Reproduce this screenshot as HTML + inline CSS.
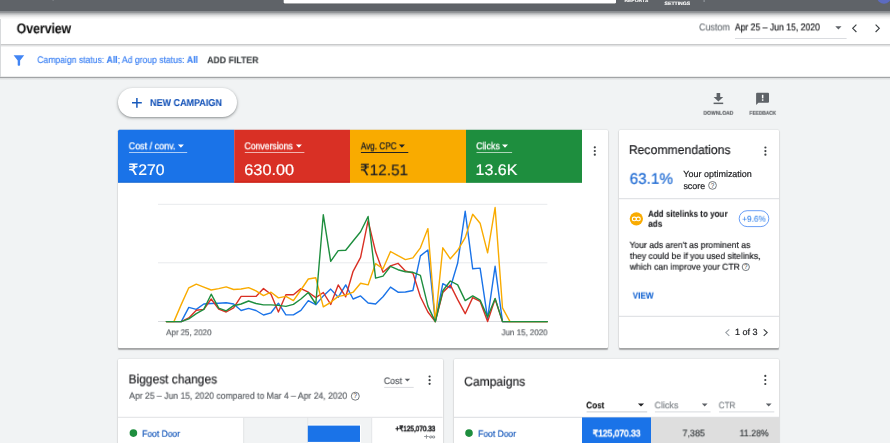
<!DOCTYPE html>
<html><head><meta charset="utf-8"><title>Overview</title>
<style>
*{box-sizing:border-box;margin:0;padding:0}
html,body{width:890px;height:443px;overflow:hidden;background:#f1f3f4;font-family:"Liberation Sans","DejaVu Sans",sans-serif}
.abs,.t{position:absolute}
.t{left:0;top:0;white-space:nowrap;transform-origin:0 0;will-change:transform;text-rendering:geometricPrecision}
.t b{font-weight:700}
.card{position:absolute;background:#fff;border-radius:1px;box-shadow:0 1.3px 1.2px rgba(0,0,0,.3),0 0 1.5px rgba(0,0,0,.2)}
</style></head><body>
<svg class="abs" style="left:0;top:0" width="890" height="443" viewBox="0 0 890 443">
  <defs>
    <linearGradient id="g1" x1="0" y1="0" x2="0" y2="1"><stop offset="0" stop-color="#74777b"/><stop offset=".25" stop-color="#b4b6b8"/><stop offset=".5" stop-color="#dedfe0"/><stop offset=".75" stop-color="#f5f5f5"/><stop offset="1" stop-color="#fff"/></linearGradient>
    <linearGradient id="g2" x1="0" y1="0" x2="0" y2="1"><stop offset="0" stop-color="#e3e4e5"/><stop offset="1" stop-color="#fff"/></linearGradient>
    <linearGradient id="g3" x1="0" y1="0" x2="0" y2="1"><stop offset="0" stop-color="#d9dbdc"/><stop offset="1" stop-color="#f1f3f4"/></linearGradient>
    <linearGradient id="g4" x1="0" y1="0" x2="0" y2="1"><stop offset="0" stop-color="#3c4043"/><stop offset="1" stop-color="#5f6368"/></linearGradient>
  </defs>
  <rect x="0" y="11.5" width="890" height="66" fill="#fff"/>
  <rect x="0" y="11.5" width="890" height="8" fill="url(#g1)"/>
  <rect x="0" y="0" width="890" height="11.5" fill="#5f6368"/>
  <rect x="283.7" y="3.4" width="332.3" height="1.2" fill="url(#g4)"/>
  <rect x="283.7" y="-1" width="332.3" height="4.4" rx=".8" fill="#fff"/>
  <rect x="703.6" y="0" width="1" height="2" fill="#9aa0a6"/>
  <rect x="52.6" y="0" width="1" height="1" fill="#80868b"/>
  <circle cx="884" cy="-3.2" r="7" fill="#5c6bc0"/>
  <rect x="0" y="44.2" width="890" height="1.3" fill="#bcbdbf"/>
  <rect x="0" y="45.5" width="890" height="2" fill="url(#g2)"/>
  <rect x="0" y="76.8" width="890" height="1.2" fill="#a2a4a6"/>
  <rect x="0" y="78" width="890" height="2.5" fill="url(#g3)"/>
  <rect x="0" y="19" width=".9" height="58" fill="#d4d6d8"/>
  <rect x="735" y="38" width="111.6" height="1" fill="#dadce0"/>
</svg>
<svg class="abs" style="left:0;top:0" width="890" height="443" viewBox="0 0 890 443">
  <!-- header icons -->
  <path d="M835.3 26.3h6.2l-3.1 3.1z" fill="#5f6368"/>
  <path d="M856.4 24.6l-3.7 3.7 3.7 3.7" fill="none" stroke="#3c4043" stroke-width="1.15"/>
  <path d="M875.6 24.6l3.7 3.7-3.7 3.7" fill="none" stroke="#3c4043" stroke-width="1.15"/>
  <!-- filter funnel -->
  <path d="M13.6 55.2h10.6l-4.1 5.4v4.4q0 .8-.8.8h-.8q-.8 0-.8-.8v-4.4z" fill="#4285f4"/>
</svg>

<!-- new campaign button -->
<div class="abs" style="left:117.6px;top:87.6px;width:119.4px;height:29.6px;border-radius:15px;background:#fff;box-shadow:0 1px 2px rgba(60,64,67,.4),0 1px 3px 1px rgba(60,64,67,.15)"></div>
<svg class="abs" style="left:0;top:0" width="890" height="443" viewBox="0 0 890 443">
  <path d="M132 102.8h9.8M136.9 97.9v9.8" stroke="#185abc" stroke-width="1.5" fill="none"/>
  <!-- download -->
  <path d="M716.6 92.9h3.6v4h3l-4.8 4.5-4.8-4.5h3z" fill="#5f6368"/>
  <rect x="713.6" y="102.6" width="9.6" height="1.5" fill="#5f6368"/>
  <!-- feedback -->
  <path d="M757.1 92.7h10.9q1 0 1 1v8.1q0 1-1 1h-9.6l-2.3 2.3v-11.4q0-1 1-1z" fill="#5f6368"/>
  <rect x="761.9" y="94.8" width="1.5" height="3.6" fill="#fff"/>
  <rect x="761.9" y="99.3" width="1.5" height="1.5" fill="#fff"/>
</svg>

<!-- main card -->
<div class="card" style="left:118px;top:130px;width:490px;height:217.9px"></div>

<!-- recommendations card -->
<div class="card" style="left:619px;top:130px;width:160px;height:217.9px"></div>

<!-- bottom cards -->
<div class="card" style="left:118px;top:358.7px;width:324.6px;height:100px"></div>
<div class="card" style="left:454px;top:358.7px;width:325.2px;height:100px"></div>


<svg class="abs" style="left:0;top:0" width="890" height="443" viewBox="0 0 890 443">
  <path d="M118 131.3q0-1.5 1.5-1.5H234.2V182.6H118z" fill="#1a73e8"/>
  <rect x="234.2" y="129.8" width="115.8" height="52.8" fill="#d93025"/>
  <rect x="118" y="181.7" width="116.2" height=".9" fill="#1765cc"/>
  <rect x="234.2" y="181.7" width="115.8" height=".9" fill="#c5170c"/>
  <rect x="350" y="181.7" width="116" height=".9" fill="#ef9a00"/>
  <rect x="466" y="181.7" width="116" height=".9" fill="#18803a"/>
  <rect x="739.2" y="210.7" width="29.6" height="15.9" rx="7.95" fill="none" stroke="#4285f4" stroke-width=".8"/>
  <rect x="350" y="129.8" width="116" height="52.8" fill="#f9ab00"/>
  <rect x="466" y="129.8" width="116" height="52.8" fill="#1e8e3e"/>
  <rect x="619" y="198.2" width="160" height="1" fill="#dadce0"/>
  <rect x="619" y="315.8" width="160" height="1" fill="#dadce0"/>
  <circle cx="636.35" cy="218.85" r="6.65" fill="#f9ab00"/>
  <rect x="243.4" y="417.6" width="128.4" height="30" fill="#f1f3f4"/>
  <rect x="307.2" y="417.6" width="1" height="30" fill="#e4e6e8"/>
  <rect x="118" y="416.8" width="324.6" height="1" fill="#e0e2e4"/>
  <rect x="243.2" y="417.6" width="1" height="30" fill="#e3e5e6"/>
  <rect x="371.2" y="417.6" width="1" height="30" fill="#e4e6e8"/>
  <rect x="307.8" y="424.6" width="53.2" height="18.2" fill="#fff"/>
  <rect x="307.8" y="425.6" width="52.2" height="16.3" fill="#1a73e8"/>
  <circle cx="133.4" cy="433.1" r="3.8" fill="#1e8e3e"/>
  <rect x="454" y="416.8" width="325.2" height="1" fill="#dadce0"/>
  <rect x="582" y="417.4" width="69" height="30" fill="#1a73e8"/>
  <rect x="651" y="417.4" width="128.2" height="30" fill="#dedede"/>
  <circle cx="469" cy="433.1" r="3.8" fill="#1e8e3e"/>
</svg>
<svg class="abs" style="left:0;top:0" width="890" height="443" viewBox="0 0 890 443">
  <!-- tile underlines + carets -->
  <g stroke="#fff" stroke-width=".8" stroke-opacity=".8" fill="none">
    <path d="M129 152.5h58.2M244.8 152.5h59.6M476.5 152.5h35.6"/>
  </g>
  <path d="M360.9 152.5h47.4" stroke="#202124" stroke-width="1" fill="none"/>
  <path d="M177.9 144.6h6l-3 3.2zM295.9 144.6h6l-3 3.2zM502 144.6h6l-3 3.2z" fill="#fff"/>
  <path d="M398.9 144.6h6l-3 3.2z" fill="#202124"/>
  <!-- kebab menus -->
  <g fill="#3c4043">
    <circle cx="594.8" cy="147.3" r="1.1"/><circle cx="594.8" cy="151" r="1.1"/><circle cx="594.8" cy="154.7" r="1.1"/>
    <circle cx="765.4" cy="147.5" r="1.1"/><circle cx="765.4" cy="151.1" r="1.1"/><circle cx="765.4" cy="154.7" r="1.1"/>
    <circle cx="429.6" cy="376.5" r="1.1"/><circle cx="429.6" cy="380.2" r="1.1"/><circle cx="429.6" cy="383.8" r="1.1"/>
    <circle cx="765.3" cy="375.9" r="1.1"/><circle cx="765.3" cy="380" r="1.1"/><circle cx="765.3" cy="384" r="1.1"/>
  </g>
  <!-- chart grid -->
  <g stroke="#e8eaed" stroke-width="1" fill="none">
    <path d="M158 204.3h389.4M158 262.8h389.4"/>
  </g>
  <path d="M158 321.5h389.4" stroke="#dadce0" stroke-width="1" fill="none"/>
  <polyline points="166.4,321.6 173.9,321.6 181.3,321.6 188.8,307.4 196.3,309.4 203.8,304.0 211.2,303.5 218.7,303.2 226.2,302.8 233.6,304.0 241.1,310.5 248.6,308.4 256.0,310.5 263.5,315.0 271.0,312.8 278.4,303.2 285.9,314.9 293.4,314.9 300.9,310.3 308.3,300.6 315.8,304.7 323.3,295.9 330.7,289.1 338.2,297.3 345.7,284.9 353.1,299.0 360.6,295.9 368.1,303.0 375.6,304.0 383.0,296.8 390.5,287.1 398.0,292.2 405.4,292.0 412.9,290.5 420.4,255.9 427.9,250.0 435.3,321.6 442.8,283.7 450.3,287.8 457.7,263.0 465.2,211.3 472.7,268.8 480.1,268.1 487.6,318.3 495.1,266.3 502.5,321.6 510.0,321.6 517.5,321.6 525.0,321.6 532.4,321.6 539.9,321.6 547.4,321.6" fill="none" stroke="#1a73e8" stroke-width="1.4" stroke-linejoin="round" stroke-linecap="round"/>
<polyline points="166.4,321.6 173.9,321.6 181.3,321.6 188.8,317.9 196.3,310.3 203.8,309.4 211.2,299.0 218.7,309.1 226.2,312.0 233.6,307.8 241.1,296.4 248.6,296.4 256.0,296.4 263.5,288.6 271.0,294.2 278.4,312.0 285.9,294.7 293.4,294.7 300.9,288.6 308.3,292.2 315.8,297.6 323.3,292.5 330.7,304.4 338.2,284.9 345.7,296.8 353.1,271.3 360.6,257.3 368.1,220.7 375.6,251.8 383.0,272.2 390.5,265.8 398.0,263.3 405.4,270.9 412.9,273.1 420.4,296.8 427.9,312.0 435.3,321.6 442.8,292.5 450.3,284.9 457.7,299.6 465.2,313.7 472.7,297.6 480.1,301.3 487.6,321.6 495.1,299.0 502.5,321.6 510.0,321.6 517.5,321.6 525.0,321.6 532.4,321.6 539.9,321.6 547.4,321.6" fill="none" stroke="#d93025" stroke-width="1.4" stroke-linejoin="round" stroke-linecap="round"/>
<polyline points="166.4,321.6 173.9,321.6 181.3,304.4 188.8,287.8 196.3,284.1 203.8,287.1 211.2,290.0 218.7,288.6 226.2,286.9 233.6,289.5 241.1,289.0 248.6,287.6 256.0,290.8 263.5,295.6 271.0,292.2 278.4,297.9 285.9,296.4 293.4,300.6 300.9,290.0 308.3,279.0 315.8,277.8 323.3,306.9 330.7,302.3 338.2,296.4 345.7,295.1 353.1,292.2 360.6,283.2 368.1,284.9 375.6,263.6 383.0,268.8 390.5,251.5 398.0,255.7 405.4,259.6 412.9,257.9 420.4,247.8 427.9,228.6 435.3,321.6 442.8,247.8 450.3,258.8 457.7,250.3 465.2,237.6 472.7,214.3 480.1,223.2 487.6,252.8 495.1,207.5 502.5,307.8 510.0,321.6 517.5,321.6 525.0,321.6 532.4,321.6 539.9,321.6 547.4,321.6" fill="none" stroke="#f9ab00" stroke-width="1.4" stroke-linejoin="round" stroke-linecap="round"/>
<polyline points="166.4,321.6 173.9,321.6 181.3,321.6 188.8,318.8 196.3,313.7 203.8,309.4 211.2,294.2 218.7,308.1 226.2,310.8 233.6,305.7 241.1,304.0 248.6,301.0 256.0,303.5 263.5,304.9 271.0,304.9 278.4,305.4 285.9,306.4 293.4,304.4 300.9,299.0 308.3,292.5 315.8,304.0 323.3,214.8 330.7,261.4 338.2,250.6 345.7,250.3 353.1,241.0 360.6,231.7 368.1,216.5 375.6,278.1 383.0,276.1 390.5,266.3 398.0,269.7 405.4,271.7 412.9,272.3 420.4,275.3 427.9,306.1 435.3,321.6 442.8,290.8 450.3,281.0 457.7,284.9 465.2,300.6 472.7,295.9 480.1,300.1 487.6,317.1 495.1,298.4 502.5,321.6 510.0,321.6 517.5,321.6 525.0,321.6 532.4,321.6 539.9,321.6 547.4,321.6" fill="none" stroke="#1e8e3e" stroke-width="1.4" stroke-linejoin="round" stroke-linecap="round"/>
  <!-- help icons -->
  <g fill="none" stroke="#5f6368" stroke-width=".85">
    <circle cx="712.5" cy="185.4" r="3.9"/>
    <circle cx="745.8" cy="267" r="3.6"/>
    <circle cx="355.3" cy="396.2" r="4"/>
  </g>
  <!-- link icon in orange circle -->
  <g fill="none" stroke="#fff" stroke-width="1.1">
    <rect x="632.3" y="217.1" width="4" height="3.6" rx="1.8"/>
    <rect x="636.3" y="217.1" width="4" height="3.6" rx="1.8"/>
  </g>
  <!-- rec pager -->
  <path d="M729.3 329.3l-3.5 3.3 3.5 3.3" fill="none" stroke="#9aa0a6" stroke-width="1.1"/>
  <path d="M763.7 329.3l3.5 3.3-3.5 3.3" fill="none" stroke="#3c4043" stroke-width="1.1"/>
  <!-- biggest changes cost dropdown -->
  <path d="M404.7 378.8h5.4l-2.7 2.7z" fill="#5f6368"/>
  <path d="M384.2 387.4h29.5" stroke="#dadce0" stroke-width="1"/>
  <!-- campaigns header -->
  <path d="M637.9 403.6h6.2l-3.1 2.9z" fill="#202124"/>
  <path d="M701.8 403.6h5.8l-2.9 2.9zM765.8 403.6h5.8l-2.9 2.9z" fill="#5f6368"/>
  <path d="M586.6 411.8h60.6" stroke="#d5d7da" stroke-width="1.2"/>
  <path d="M654.9 411.8h55.7M719 411.8h55.3" stroke="#e0e2e5" stroke-width="1.2"/>
  <!-- question marks in help icons as text -->
  <g font-family="Liberation Sans, sans-serif" font-size="6.3" fill="#3c4043" text-anchor="middle">
    <text x="712.5" y="187.6">?</text>
    <text x="745.8" y="269.1">?</text>
    <text x="355.3" y="398.4">?</text>
  </g>
</svg>
<span class="t" style="font-size:14px;line-height:18px;font-weight:700;-webkit-text-stroke:0.1px currentColor;color:#111;transform:translate(16.65px,19.20px) scaleX(0.8765)">Overview</span>
<span class="t" style="font-size:4.8px;line-height:9px;font-weight:700;-webkit-text-stroke:0.1px currentColor;color:#fff;transform:translate(624.53px,-3.50px) scaleX(1.0243)">REPORTS</span>
<span class="t" style="font-size:4.8px;line-height:9px;font-weight:700;-webkit-text-stroke:0.1px currentColor;color:#fff;transform:translate(664.52px,-0.30px) scaleX(1.0739)">SETTINGS</span>
<span class="t" style="font-size:9.9px;line-height:14px;font-weight:400;-webkit-text-stroke:0.2px currentColor;color:#757a7f;transform:translate(699.01px,21.40px) scaleX(0.9094)">Custom</span>
<span class="t" style="font-size:9.9px;line-height:14px;font-weight:400;-webkit-text-stroke:0.2px currentColor;color:#202124;transform:translate(734.87px,21.40px) scaleX(0.8744)">Apr 25 – Jun 15, 2020</span>
<span class="t" style="font-size:9.5px;line-height:14px;font-weight:400;-webkit-text-stroke:0.2px currentColor;color:#4285f4;transform:translate(37.28px,53.90px) scaleX(0.9055)">Campaign status: <b>All</b>; Ad group status: <b>All</b></span>
<span class="t" style="font-size:9.4px;line-height:14px;font-weight:700;-webkit-text-stroke:0.1px currentColor;color:#3c4043;transform:translate(207.12px,53.20px) scaleX(0.9326)">ADD FILTER</span>
<span class="t" style="font-size:9.9px;line-height:14px;font-weight:700;-webkit-text-stroke:0.1px currentColor;color:#1553b8;transform:translate(150.00px,97.00px) scaleX(0.9120)">NEW CAMPAIGN</span>
<span class="t" style="font-size:5.6px;line-height:10px;font-weight:700;-webkit-text-stroke:0.1px currentColor;color:#54575b;transform:translate(703.48px,108.80px) scaleX(0.8865)">DOWNLOAD</span>
<span class="t" style="font-size:5.6px;line-height:10px;font-weight:700;-webkit-text-stroke:0.1px currentColor;color:#54575b;transform:translate(749.41px,108.80px) scaleX(0.8612)">FEEDBACK</span>
<span class="t" style="font-size:9.9px;line-height:14px;font-weight:400;-webkit-text-stroke:0.3px currentColor;color:#fff;transform:translate(128.68px,140.30px) scaleX(0.9098)">Cost / conv.</span>
<span class="t" style="font-size:15.4px;line-height:20px;font-weight:400;-webkit-text-stroke:0.2px currentColor;color:#fff;transform:translate(128.15px,161.30px) scaleX(1.0258)">₹270</span>
<span class="t" style="font-size:9.9px;line-height:14px;font-weight:400;-webkit-text-stroke:0.3px currentColor;color:#fff;transform:translate(244.48px,140.30px) scaleX(0.8786)">Conversions</span>
<span class="t" style="font-size:15.4px;line-height:20px;font-weight:400;-webkit-text-stroke:0.2px currentColor;color:#fff;transform:translate(244.30px,161.30px) scaleX(1.0598)">630.00</span>
<span class="t" style="font-size:9.9px;line-height:14px;font-weight:400;-webkit-text-stroke:0.3px currentColor;color:#202124;transform:translate(360.80px,140.30px) scaleX(0.8293)">Avg. CPC</span>
<span class="t" style="font-size:15.4px;line-height:20px;font-weight:400;-webkit-text-stroke:0.2px currentColor;color:#202124;transform:translate(359.98px,161.30px) scaleX(0.9932)">₹12.51</span>
<span class="t" style="font-size:9.9px;line-height:14px;font-weight:400;-webkit-text-stroke:0.3px currentColor;color:#fff;transform:translate(476.17px,140.30px) scaleX(0.8982)">Clicks</span>
<span class="t" style="font-size:15.4px;line-height:20px;font-weight:400;-webkit-text-stroke:0.2px currentColor;color:#fff;transform:translate(475.61px,161.30px) scaleX(1.0387)">13.6K</span>
<span class="t" style="font-size:8.3px;line-height:13px;font-weight:400;-webkit-text-stroke:0.2px currentColor;color:#5f6368;transform:translate(166.14px,326.20px) scaleX(0.9527)">Apr 25, 2020</span>
<span class="t" style="font-size:8.3px;line-height:13px;font-weight:400;-webkit-text-stroke:0.2px currentColor;color:#5f6368;transform:translate(501.53px,326.20px) scaleX(0.9589)">Jun 15, 2020</span>
<span class="t" style="font-size:12.6px;line-height:17px;font-weight:400;-webkit-text-stroke:0.2px currentColor;color:#202124;transform:translate(628.86px,142.00px) scaleX(0.9677)">Recommendations</span>
<span class="t" style="font-size:15.3px;line-height:20px;font-weight:400;-webkit-text-stroke:0.2px currentColor;color:#1967d2;transform:translate(629.62px,169.80px) scaleX(0.9990)">63.1%</span>
<span class="t" style="font-size:8.9px;line-height:13px;font-weight:400;-webkit-text-stroke:0.2px currentColor;color:#202124;transform:translate(683.34px,168.30px) scaleX(1.0106)">Your optimization</span>
<span class="t" style="font-size:8.9px;line-height:13px;font-weight:400;-webkit-text-stroke:0.2px currentColor;color:#202124;transform:translate(683.38px,179.70px) scaleX(1.0095)">score</span>
<span class="t" style="font-size:9.1px;line-height:14px;font-weight:700;-webkit-text-stroke:0.1px currentColor;color:#202124;transform:translate(648.05px,206.80px) scaleX(0.8834)">Add sitelinks to your</span>
<span class="t" style="font-size:9.1px;line-height:14px;font-weight:700;-webkit-text-stroke:0.1px currentColor;color:#202124;transform:translate(648.10px,216.70px) scaleX(0.9158)">ads</span>
<span class="t" style="font-size:8.5px;line-height:13px;font-weight:400;-webkit-text-stroke:0px currentColor;color:#1a73e8;transform:translate(742.17px,212.70px) scaleX(0.9687)">+9.6%</span>
<span class="t" style="font-size:8.8px;line-height:13px;font-weight:400;-webkit-text-stroke:0.2px currentColor;color:#202124;transform:translate(629.51px,238.90px) scaleX(0.9774)">Your ads aren't as prominent as</span>
<span class="t" style="font-size:8.8px;line-height:13px;font-weight:400;-webkit-text-stroke:0.2px currentColor;color:#202124;transform:translate(629.83px,249.90px) scaleX(0.9790)">they could be if you used sitelinks,</span>
<span class="t" style="font-size:8.8px;line-height:13px;font-weight:400;-webkit-text-stroke:0.2px currentColor;color:#202124;transform:translate(629.73px,260.70px) scaleX(0.9751)">which can improve your CTR</span>
<span class="t" style="font-size:9px;line-height:13px;font-weight:700;-webkit-text-stroke:0.1px currentColor;color:#1967d2;transform:translate(632.68px,289.60px) scaleX(0.9063)">VIEW</span>
<span class="t" style="font-size:9px;line-height:13px;font-weight:400;-webkit-text-stroke:0.2px currentColor;color:#202124;transform:translate(734.91px,325.90px) scaleX(1.0061)">1 of 3</span>
<span class="t" style="font-size:12.7px;line-height:17px;font-weight:400;-webkit-text-stroke:0.2px currentColor;color:#202124;transform:translate(128.55px,371.40px) scaleX(0.9438)">Biggest changes</span>
<span class="t" style="font-size:9.2px;line-height:14px;font-weight:400;-webkit-text-stroke:0.2px currentColor;color:#5f6368;transform:translate(129.19px,388.80px) scaleX(0.9380)">Apr 25 – Jun 15, 2020 compared to Mar 4 – Apr 24, 2020</span>
<span class="t" style="font-size:9.4px;line-height:14px;font-weight:400;-webkit-text-stroke:0.2px currentColor;color:#5f6368;transform:translate(383.84px,374.00px) scaleX(0.9367)">Cost</span>
<span class="t" style="font-size:9.3px;line-height:14px;font-weight:400;-webkit-text-stroke:0.2px currentColor;color:#185abc;transform:translate(142.14px,426.80px) scaleX(0.9155)">Foot Door</span>
<span class="t" style="font-size:7.6px;line-height:12px;font-weight:400;-webkit-text-stroke:0.55px currentColor;color:#202124;transform:translate(395.41px,423.20px) scaleX(0.8451)">+₹125,070.33</span>
<span class="t" style="font-size:7px;line-height:11px;font-weight:400;-webkit-text-stroke:0.2px currentColor;color:#80868b;transform:translate(423.64px,432.00px) scaleX(1.2945)">+∞</span>
<span class="t" style="font-size:12.7px;line-height:17px;font-weight:400;-webkit-text-stroke:0.2px currentColor;color:#202124;transform:translate(464.15px,373.70px) scaleX(0.9528)">Campaigns</span>
<span class="t" style="font-size:9.2px;line-height:14px;font-weight:700;-webkit-text-stroke:0.1px currentColor;color:#111;transform:translate(586.20px,398.30px) scaleX(0.8917)">Cost</span>
<span class="t" style="font-size:9.2px;line-height:14px;font-weight:400;-webkit-text-stroke:0.2px currentColor;color:#80868b;transform:translate(654.55px,398.30px) scaleX(0.9689)">Clicks</span>
<span class="t" style="font-size:9.2px;line-height:14px;font-weight:400;-webkit-text-stroke:0.2px currentColor;color:#80868b;transform:translate(718.63px,398.30px) scaleX(0.8824)">CTR</span>
<span class="t" style="font-size:9.3px;line-height:14px;font-weight:400;-webkit-text-stroke:0.2px currentColor;color:#185abc;transform:translate(478.14px,426.80px) scaleX(0.9155)">Foot Door</span>
<span class="t" style="font-size:9.3px;line-height:14px;font-weight:400;-webkit-text-stroke:0.55px currentColor;color:#fff;transform:translate(592.73px,426.40px) scaleX(0.9117)">₹125,070.33</span>
<span class="t" style="font-size:9.3px;line-height:14px;font-weight:400;-webkit-text-stroke:0.2px currentColor;color:#3c4043;transform:translate(682.49px,426.30px) scaleX(0.9627)">7,385</span>
<span class="t" style="font-size:9.3px;line-height:14px;font-weight:400;-webkit-text-stroke:0.2px currentColor;color:#3c4043;transform:translate(739.61px,426.30px) scaleX(0.9439)">11.28%</span>
</body></html>
